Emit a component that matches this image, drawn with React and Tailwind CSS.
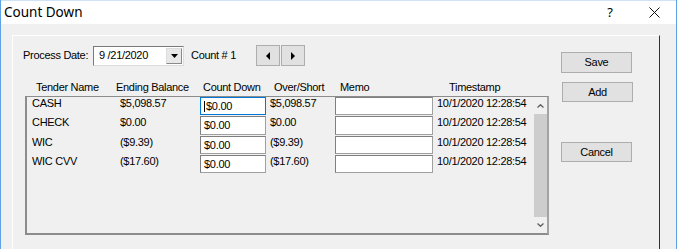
const rows = [
  { name: 'CASH', bal: '$5,098.57', over: '$5,098.57', h: 'h-[19px]', focus: true },
  { name: 'CHECK', bal: '$0.00', over: '$0.00', h: 'h-[20px]' },
  { name: 'WIC', bal: '($9.39)', over: '($9.39)', h: 'h-[19px]' },
  { name: 'WIC CVV', bal: '($17.60)', over: '($17.60)', h: 'h-[19px]' },
]

const ts = '10/1/2020 12:28:54'

function Btn({ children, className = '' }) {
  return (
    <div
      className={`flex w-[71px] items-center justify-center border border-[#adadad] bg-[#e1e1e1] ${className}`}
    >
      {children}
    </div>
  )
}

function Row({ row }) {
  return (
    <div className={`flex items-start ${row.h}`}>
      <div className="w-[93px] pl-[5px] leading-[13px]">{row.name}</div>
      <div className="w-[80px] leading-[13px]">{row.bal}</div>
      <div className="h-full w-[67px] pb-px">
        <div
          className={`flex h-full w-[66px] items-center bg-white pl-[3px] leading-[13px] ${
            row.focus ? 'border border-[#0078d7]' : 'border border-[#7f7f7f] border-b-[#a0a0a0] border-r-[#a0a0a0]'
          }`}
        >
          {row.focus ? <span className="mr-px h-[11px] w-px bg-black" /> : null}
          $0.00
        </div>
      </div>
      <div className="w-[68px] pl-[3px] leading-[13px]">{row.over}</div>
      <div className="h-full w-[99px] pb-px">
        <div className="h-full w-[98px] border border-[#7f7f7f] border-b-[#a0a0a0] border-r-[#a0a0a0] bg-white" />
      </div>
      <div className="w-[100px] pl-[3px] leading-[13px]">{ts}</div>
    </div>
  )
}

export default function App() {
  return (
    <div
      className="h-[249px] w-[677px] overflow-hidden border-x border-[#5ea3e6] bg-[#f0f0f0] text-[11px] tracking-[-0.3px] text-black"
      style={{ fontFamily: '"Liberation Sans", Arial, sans-serif' }}
    >
      {/* title bar */}
      <div
        className="flex h-[24px] items-center border-t border-[#cfe3f7] bg-white tracking-normal"
        style={{ fontFamily: '"Noto Sans", sans-serif' }}
      >
        <span className="pl-[3px] text-[13.5px] leading-none">Count Down</span>
        <div className="ml-auto flex h-full items-center">
          <span className="w-[46px] text-center text-[13px] leading-none">?</span>
          <div className="flex w-[43px] items-center justify-center">
            <svg width="11" height="11" viewBox="0 0 11 11">
              <path d="M0.5 0.5 L10.5 10.5 M10.5 0.5 L0.5 10.5" stroke="#111" strokeWidth="1" fill="none" />
            </svg>
          </div>
        </div>
      </div>

      {/* panel */}
      <div className="ml-[11px] mt-[11px] flex h-[300px] w-[648px] border-l border-t border-l-white border-t-white border-r border-r-[#333]">
        {/* left column */}
        <div className="w-[536px]">
          <div className="ml-[10px] mt-[9px] flex h-[21px] items-center">
            <span className="w-[70px]">Process Date:</span>
            <div className="flex h-[20px] w-[91px] items-center border border-[#7a7a7a] border-b-[#dcdcdc] border-r-[#dcdcdc] bg-white">
              <span className="flex-1 pl-[5px]">9 /21/2020</span>
              <div className="mr-px flex h-[16px] w-[16px] items-center justify-center border border-[#dcdcdc] border-b-[#8a8a8a] border-r-[#8a8a8a] bg-[#e8e8e8]">
                <svg width="7" height="4" viewBox="0 0 7 4">
                  <path d="M0 0 H7 L3.5 4 Z" fill="#000" />
                </svg>
              </div>
            </div>
            <span className="ml-[7px] w-[65px]">Count # 1</span>
            <div className="flex gap-px">
              <div className="flex h-[21px] w-[24px] items-center justify-center border border-[#adadad] bg-[#e1e1e1]">
                <svg width="4" height="8" viewBox="0 0 4 8">
                  <path d="M4 0 V8 L0 4 Z" fill="#000" />
                </svg>
              </div>
              <div className="flex h-[21px] w-[24px] items-center justify-center border border-[#adadad] bg-[#e1e1e1]">
                <svg width="4" height="8" viewBox="0 0 4 8">
                  <path d="M0 0 V8 L4 4 Z" fill="#000" />
                </svg>
              </div>
            </div>
          </div>

          {/* headers */}
          <div className="ml-[12px] mt-[15px] flex leading-[13px]">
            <span className="ml-[11px] w-[80px]">Tender Name</span>
            <span className="w-[87px]">Ending Balance</span>
            <span className="w-[71px]">Count Down</span>
            <span className="w-[66px]">Over/Short</span>
            <span className="w-[109px]">Memo</span>
            <span>Timestamp</span>
          </div>

          {/* grid */}
          <div className="ml-[12px] mt-[2px] flex h-[139px] w-[524px] border-x-2 border-b-2 border-t border-[#8c8c8c] border-r-[#a3a3a3]">
            <div className="w-[507px] pt-0">
              {rows.map((row) => (
                <Row key={row.name} row={row} />
              ))}
            </div>
            <div className="flex w-[13px] flex-col">
              <div className="flex h-[17px] items-center justify-center">
                <svg width="7" height="4" viewBox="0 0 7 4">
                  <path d="M0.5 3.5 L3.5 0.7 L6.5 3.5" stroke="#606060" strokeWidth="1.3" fill="none" />
                </svg>
              </div>
              <div className="flex-1 bg-[#cdcdcd]" />
              <div className="flex h-[16px] items-center justify-center">
                <svg width="7" height="4" viewBox="0 0 7 4">
                  <path d="M0.5 0.5 L3.5 3.3 L6.5 0.5" stroke="#606060" strokeWidth="1.3" fill="none" />
                </svg>
              </div>
            </div>
          </div>
        </div>

        {/* right buttons */}
        <div className="ml-[12px] flex flex-col">
          <Btn className="mt-[16px] h-[21px]">Save</Btn>
          <Btn className="ml-px mt-[9px] h-[20px]">Add</Btn>
          <Btn className="mt-[40px] h-[20px]">Cancel</Btn>
        </div>
      </div>
    </div>
  )
}
